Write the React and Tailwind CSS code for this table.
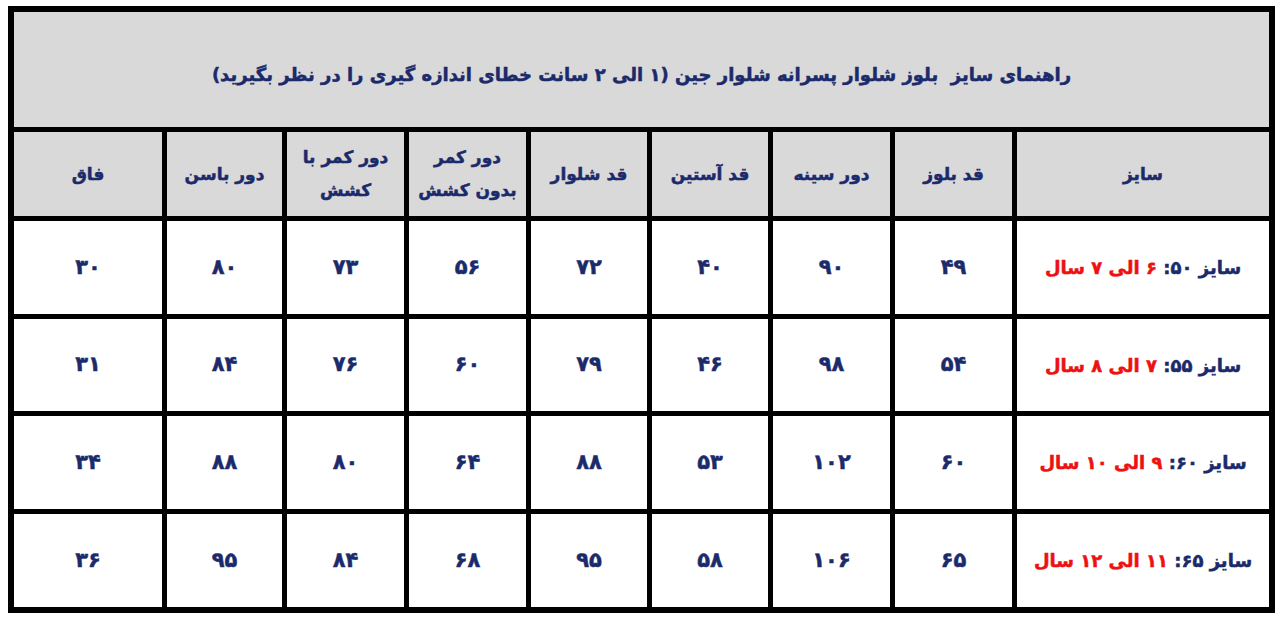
import React from "react";

const navy = "text-[#1b2a6b]";

const headers = [
  ["سایز"],
  ["قد بلوز"],
  ["دور سینه"],
  ["قد آستین"],
  ["قد شلوار"],
  ["دور کمر", "بدون کشش"],
  ["دور کمر با", "کشش"],
  ["دور باسن"],
  ["فاق"],
];

const rows = [
  { size: "۵۰", age: "۶ الی ۷ سال", vals: ["۴۹", "۹۰", "۴۰", "۷۲", "۵۶", "۷۳", "۸۰", "۳۰"] },
  { size: "۵۵", age: "۷ الی ۸ سال", vals: ["۵۴", "۹۸", "۴۶", "۷۹", "۶۰", "۷۶", "۸۴", "۳۱"] },
  { size: "۶۰", age: "۹ الی ۱۰ سال", vals: ["۶۰", "۱۰۲", "۵۳", "۸۸", "۶۴", "۸۰", "۸۸", "۳۴"] },
  { size: "۶۵", age: "۱۱ الی ۱۲ سال", vals: ["۶۵", "۱۰۶", "۵۸", "۹۵", "۶۸", "۸۴", "۹۵", "۳۶"] },
];

export default function App() {
  return (
    <div className="w-[1280px] h-[620px] bg-white pt-[6px] pl-[8px]" style={{ fontFamily: '"DejaVu Sans", sans-serif' }}>
      <div
        dir="rtl"
        className="w-[1267px] bg-black p-[6px] grid gap-[5px] grid-cols-[252px_117px_117px_116px_116px_117px_117px_115px_148px] grid-rows-[115px_84px_93px_92px_93px_93px] font-bold [-webkit-text-stroke:0.5px_currentColor]"
      >
        <div className={`col-span-9 bg-[#d9d9d9] flex items-center justify-center pt-[10px] text-[18px] ${navy} whitespace-pre`}>
          {"راهنمای سایز  بلوز شلوار پسرانه شلوار جین (۱ الی ۲ سانت خطای اندازه گیری را در نظر بگیرید)"}
        </div>
        {headers.map((h, i) => (
          <div key={i} className={`bg-[#d9d9d9] flex flex-col items-center justify-center text-[17px] leading-[33px] ${navy}`}>
            {h.map((l, j) => (
              <span key={j}>{l}</span>
            ))}
          </div>
        ))}
        {rows.map((r, ri) => (
          <React.Fragment key={ri}>
            <div className="bg-white flex items-center justify-center text-[18px]">
              <span className={navy}>{`سایز ${r.size}: `}</span>
              <span className="text-[#ee1111] whitespace-pre">{" " + r.age}</span>
            </div>
            {r.vals.map((v, vi) => (
              <div key={vi} className={`bg-white flex items-center justify-center text-[21px] ${navy}`}>
                {v}
              </div>
            ))}
          </React.Fragment>
        ))}
      </div>
    </div>
  );
}
